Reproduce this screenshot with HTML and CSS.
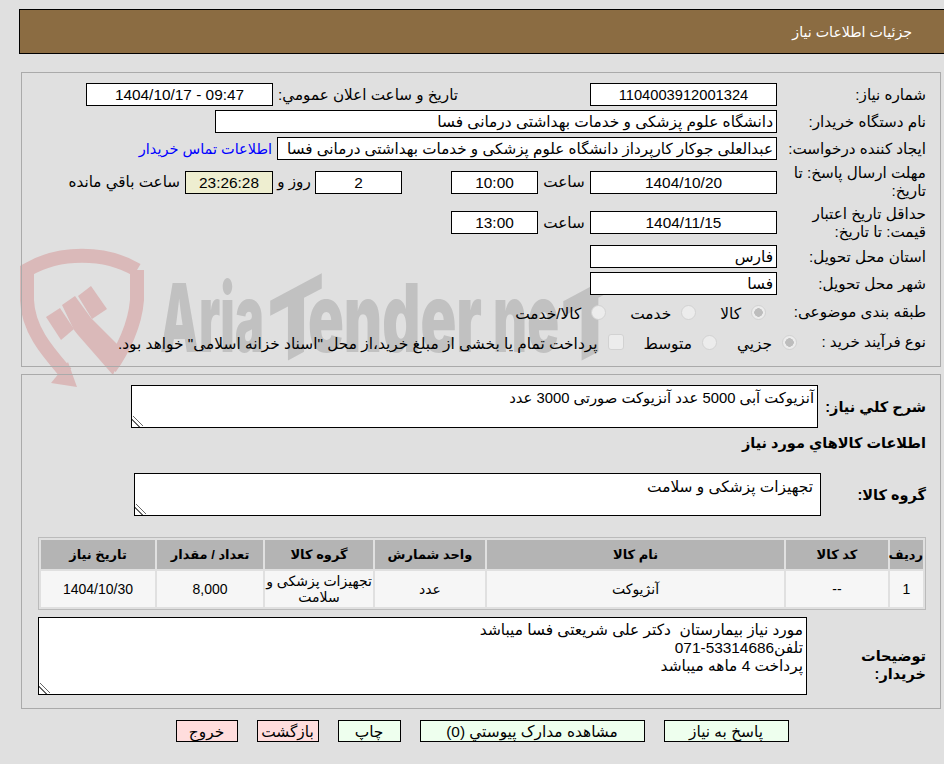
FILE: index.html
```html
<!DOCTYPE html>
<html lang="fa">
<head>
<meta charset="utf-8">
<title>جزئیات اطلاعات نیاز</title>
<link rel="stylesheet" href="styles.css">
</head>
<body>
<svg class="watermark" width="944" height="764" viewBox="0 0 944 764" aria-hidden="true">
  <g class="wm-shield">
    <path class="wm-stroke" d="M137 270 C105 251 59 251 27 270 L27 300 C28 330 48 352 66 373"/>
    <path class="wm-stroke" d="M137 270 L137 300 C135 325 123 350 110 368"/>
    <polygon points="68,362 77,387 51,383"/>
    <polygon points="46,317 60,308 74,329 61,340"/>
    <polygon points="62,305 75,296 91,318 123,350 113,375 78,335 74,330"/>
    <polygon points="78,296 91,286 107,309 92,319"/>
  </g>
  <g class="wm-text">
    <text x="160" y="352" textLength="104" lengthAdjust="spacingAndGlyphs">Aria</text>
    <text transform="translate(296 356) skewY(-28)" text-anchor="middle" textLength="56" lengthAdjust="spacingAndGlyphs">T</text>
    <text x="308" y="352" textLength="174" lengthAdjust="spacingAndGlyphs">ender</text>
    <text x="493" y="352" textLength="66" lengthAdjust="spacingAndGlyphs">ne</text>
    <text transform="translate(590 356) skewY(-28)" text-anchor="middle" textLength="58" lengthAdjust="spacingAndGlyphs">T</text>
  </g>
</svg>

<header class="page-title">جزئیات اطلاعات نیاز</header>

<section class="panel panel-info">
  <div class="row">
    <div class="label">شماره نیاز:</div>
    <div class="field w187 center code">1104003912001324</div>
    <div class="label-inline gap132">تاریخ و ساعت اعلان عمومي:</div>
    <div class="field w187 center ltr">1404/10/17 - 09:47</div>
  </div>
  <div class="row">
    <div class="label">نام دستگاه خریدار:</div>
    <div class="field w562">دانشگاه علوم پزشکی و خدمات بهداشتی درمانی فسا</div>
  </div>
  <div class="row">
    <div class="label">ایجاد کننده درخواست:</div>
    <div class="field w500 creator">عبدالعلی جوکار کارپرداز دانشگاه علوم پزشکی و خدمات بهداشتی درمانی فسا</div>
    <a class="contact" href="#">اطلاعات تماس خریدار</a>
  </div>
  <div class="row row-date1">
    <div class="label">مهلت ارسال پاسخ: تا تاریخ:</div>
    <div class="field w187 center">1404/10/20</div>
    <div class="unit w52">ساعت</div>
    <div class="field w87 center">10:00</div>
    <div class="field w87 center gap49">2</div>
    <div class="unit w42">روز و</div>
    <div class="field w88 center timer">23:26:28</div>
    <div class="label-inline gap5">ساعت باقي مانده</div>
  </div>
  <div class="row row-date2">
    <div class="label">حداقل تاریخ اعتبار قیمت: تا تاریخ:</div>
    <div class="field w187 center">1404/11/15</div>
    <div class="unit w52">ساعت</div>
    <div class="field w87 center">13:00</div>
  </div>
  <div class="row">
    <div class="label">استان محل تحویل:</div>
    <div class="field w187">فارس</div>
  </div>
  <div class="row">
    <div class="label">شهر محل تحویل:</div>
    <div class="field w187">فسا</div>
  </div>
  <div class="row row-radio">
    <div class="label">طبقه بندی موضوعی:</div>
    <div class="options opts-subject">
      <label class="option"><input class="radio" type="radio" name="subject" checked disabled><span>کالا</span></label>
      <label class="option"><input class="radio" type="radio" name="subject" disabled><span>خدمت</span></label>
      <label class="option"><input class="radio" type="radio" name="subject" disabled><span>کالا/خدمت</span></label>
    </div>
  </div>
  <div class="row row-radio">
    <div class="label label-short">نوع فرآیند خرید :</div>
    <div class="options opts-process">
      <label class="option"><input class="radio" type="radio" name="process" checked disabled><span>جزیي</span></label>
      <label class="option"><input class="radio" type="radio" name="process" disabled><span>متوسط</span></label>
      <label class="option"><input class="check" type="checkbox" disabled><span>پرداخت تمام یا بخشی از مبلغ خرید،از محل "اسناد خزانه اسلامی" خواهد بود.</span></label>
    </div>
  </div>
</section>

<section class="panel panel-detail">
  <div class="block">
    <div class="strong l108">شرح کلي نیاز:</div>
    <textarea class="box box-desc" readonly>آنزیوکت آبی 5000 عدد آنزیوکت صورتی 3000 عدد</textarea>
  </div>
  <h2 class="strong section-title">اطلاعات کالاهاي مورد نیاز</h2>
  <div class="block block-group">
    <div class="strong l105">گروه کالا:</div>
    <textarea class="box box-group" readonly>تجهیزات پزشکی و سلامت</textarea>
  </div>
  <table class="items">
    <colgroup>
      <col class="c1"><col class="c2"><col class="c3"><col class="c4"><col class="c5"><col class="c6"><col class="c7">
    </colgroup>
    <thead>
      <tr><th>ردیف</th><th>کد کالا</th><th>نام کالا</th><th>واحد شمارش</th><th>گروه کالا</th><th>تعداد / مقدار</th><th>تاریخ نیاز</th></tr>
    </thead>
    <tbody>
      <tr><td>1</td><td>--</td><td>آنژیوکت</td><td>عدد</td><td class="tight">تجهیزات پزشکی و سلامت</td><td>8,000</td><td>1404/10/30</td></tr>
    </tbody>
  </table>
  <div class="block block-notes">
    <div class="strong l119">توضیحات خریدار:</div>
    <textarea class="box box-notes" readonly>مورد نیاز بیمارستان  دکتر علی شریعتی فسا میباشد
تلفن53314686-071
پرداخت 4 ماهه میباشد</textarea>
  </div>
</section>

<nav class="actions">
  <button class="btn ok w125" type="button">پاسخ به نیاز</button>
  <button class="btn ok w225" type="button">مشاهده مدارک پیوستي (0)</button>
  <button class="btn ok w63" type="button">چاپ</button>
  <button class="btn no w62" type="button">بازگشت</button>
  <button class="btn no w62" type="button">خروج</button>
</nav>
</body>
</html>
```
FILE: styles.css
```css
* { box-sizing: border-box; }
html { background: #e0e0e0; }
body {
  margin: 0;
  height: 764px;
  overflow: hidden;
  direction: rtl;
  color: #000;
  font-family: "Liberation Sans", "DejaVu Sans", sans-serif;
  font-size: 15.4px;
}
.watermark { position: absolute; left: 0; top: 0; z-index: -1; direction: ltr; }
.wm-shield { fill: #dab9b9; }
.wm-stroke { fill: none; stroke: #dab9b9; stroke-width: 14; }
.wm-text { fill: #c1c1c1; font-family: "Inter", sans-serif; font-weight: 900; font-size: 95px; }

.page-title {
  height: 45px;
  margin: 9px -10px 0 19px;
  padding: 0 41px 0 0;
  background: #8b6c42;
  border: 1px solid #000;
  color: #fff;
  line-height: 44px;
  font-size: 14.2px;
}

.panel { width: 920px; margin-left: 21px; margin-right: 3px; border: 1px solid #aaa; }
.panel-info { margin-top: 18px; padding: 8px 14px 8px 0; height: 295px; }
.panel-detail { margin-top: 7px; padding: 10px 14px 13px 16px; height: 335px; }

.row { display: flex; align-items: center; height: 27px; }
.row-date1 { height: 40px; }
.row-date2 { height: 41px; }
.row-radio { height: 30px; }

.label { width: 149px; flex: none; padding-left: 4px; line-height: 18px; font-size: 15.2px; }
.label-short { width: 129px; }
.label-inline { font-size: 15.2px; white-space: nowrap; }
.gap132 { flex: none; width: 180px; margin-right: 132px; margin-left: 5px; }
.gap5 { margin-right: 5px; }
.gap49 { margin-right: 49px; }

.field {
  flex: none;
  height: 23px;
  padding: 0 3px;
  background: #fff;
  border: 1px solid #000;
  line-height: 22px;
  font-size: 15.4px;
  white-space: nowrap;
  overflow: hidden;
}
.center { text-align: center; }
.code { font-size: 14.7px; }
.creator { font-size: 15.2px; }
.ltr { direction: ltr; }
.timer { background: #eeeed0; }
.w187 { width: 187px; }
.w562 { width: 562px; }
.w500 { width: 500px; }
.w87 { width: 87px; }
.w88 { width: 88px; }
.unit { flex: none; text-align: center; font-size: 15.2px; }
.w52 { width: 52px; }
.w42 { width: 42px; }

.contact { margin-right: 5px; color: #00f; text-decoration: none; font-size: 14.5px; white-space: nowrap; }

.options { display: flex; align-items: center; font-size: 15.4px; }
.opts-subject { gap: 24px; margin-right: 11px; }
.opts-process { gap: 20px; }
.option { display: flex; align-items: center; gap: 10px; white-space: nowrap; }
.option span { position: relative; top: 2px; }
.radio, .check {
  appearance: none;
  flex: none;
  width: 15px;
  height: 15px;
  margin: 0;
  background: #ececec;
  border: 1px solid #d2d2d2;
}
.radio { border-radius: 50%; }
.check { width: 16px; height: 16px; border-radius: 3px; }
.radio:checked { background: radial-gradient(circle, #bdbdbd 0 4px, #ececec 4.5px); }

.block { display: flex; align-items: center; }
.strong { font-size: 14.5px; font-weight: 700; line-height: 18px; margin: 0; }
.l108 { width: 108px; flex: none; }
.l105 { width: 105px; flex: none; }
.l119 { width: 119px; flex: none; padding-left: 30px; position: relative; top: 9px; }
.section-title { height: 22px; margin: 4px 0 0; line-height: 22px; }
.block-group { margin-top: 19px; }
.block-notes { margin-top: 7px; }

.box {
  display: block;
  flex: none;
  background: #fff;
  border: 1px solid #000;
  color: #000;
  font-family: inherit;
  font-size: 15.4px;
  line-height: 18px;
  overflow: hidden;
  outline: none;
  margin: 0;
}
.box::-webkit-resizer {
  background: linear-gradient(45deg, transparent 30%, #666 30% 37%, transparent 37% 52%, #666 52% 59%, transparent 59%) left bottom / 11px 11px no-repeat;
}
.box-desc { width: 687px; height: 43px; padding: 3px; font-size: 14.8px; }
.box-group { width: 687px; height: 43px; padding: 4px 7px; }
.box-notes { width: 769px; height: 78px; padding: 3px; }

.items {
  width: 888px;
  margin-top: 21px;
  table-layout: fixed;
  border: 1px solid #bbb;
  border-spacing: 2px;
  border-collapse: separate;
  text-align: center;
}
.c1 { width: 33px; }
.c2 { width: 102px; }
.c3 { width: 297px; }
.c4 { width: 110px; }
.c5 { width: 108px; }
.c6 { width: 106px; }
.c7 { width: 114px; }
.items th { height: 29px; padding: 0; background: #b4b4b4; font-size: 13px; font-weight: 700; }
.items td { height: 36px; padding: 0; background: #f6f6f6; font-size: 14px; }
.items td.tight { line-height: 16px; }

.actions { display: flex; justify-content: center; gap: 19px; width: 922px; margin: 11px 1px 0 21px; }
.btn {
  height: 22px;
  padding: 2px 0 0;
  border: 1px solid #000;
  color: #000;
  font-family: inherit;
  font-size: 15.4px;
  line-height: 18px;
}
.ok { background: #eeffee; }
.no { background: #ffdddd; }
.w125 { width: 125px; }
.w225 { width: 225px; }
.w63 { width: 63px; }
.w62 { width: 62px; }
```
